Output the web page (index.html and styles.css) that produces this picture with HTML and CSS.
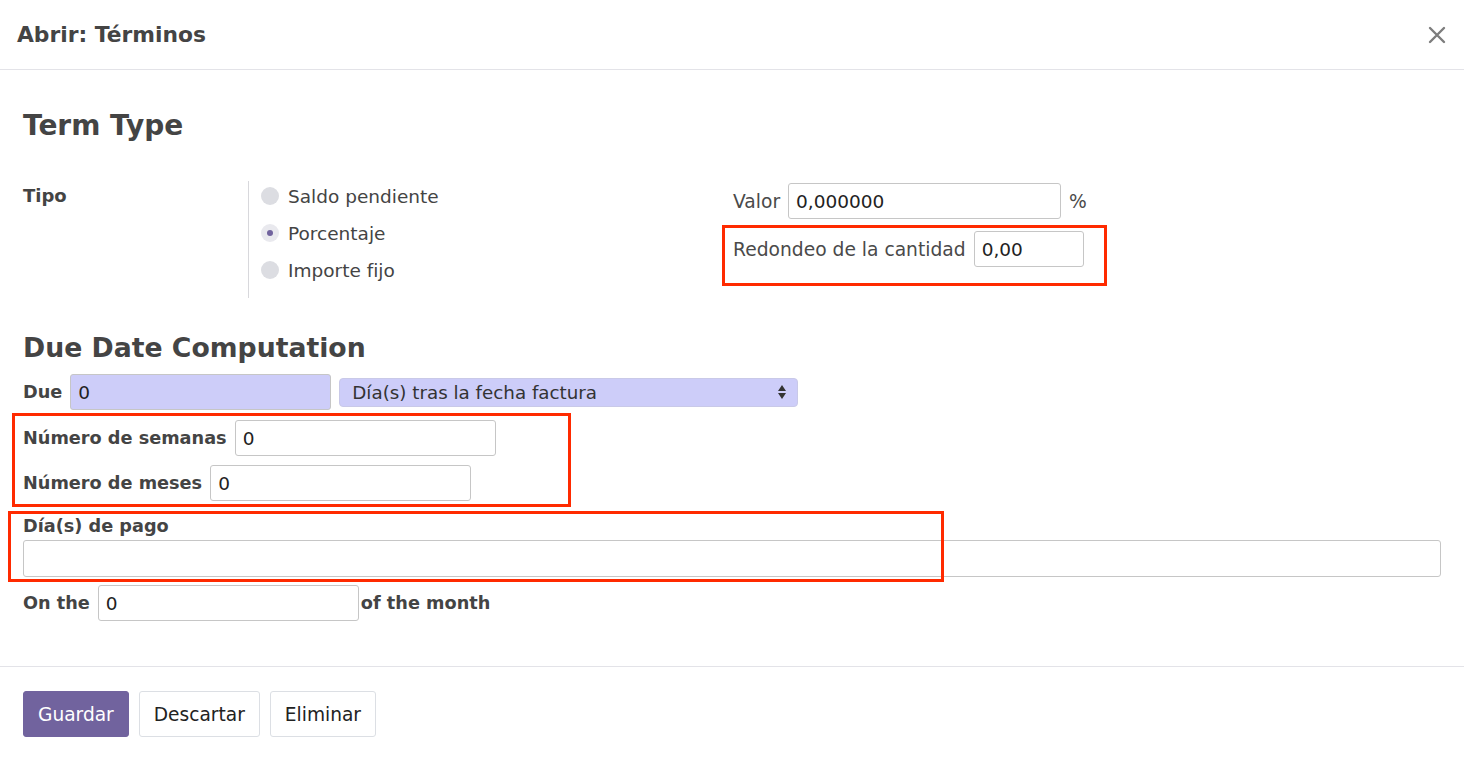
FILE: index.html
```html
<!DOCTYPE html>
<html lang="es">
<head>
    <meta charset="UTF-8">
    <title>Abrir: Términos</title>
    <link rel="stylesheet" href="styles.css">
</head>
<body>
    <div class="modal">
        <div class="modal-header">
            <h4 class="modal-title">Abrir: Términos</h4>
            <button class="close" type="button">
                <svg width="18" height="18" viewBox="0 0 18 18"><path d="M2 2 L16 16 M16 2 L2 16" stroke="#7d7d7d" stroke-width="2.4" stroke-linecap="round"/></svg>
            </button>
        </div>

        <div class="modal-body">
            <h2 class="section-title">Term Type</h2>
            <div class="group">
                <div class="group-left">
                    <div class="field-label">Tipo</div>
                    <div class="radios">
                        <div class="radio-row"><span class="radio"></span>Saldo pendiente</div>
                        <div class="radio-row"><span class="radio checked"></span>Porcentaje</div>
                        <div class="radio-row"><span class="radio"></span>Importe fijo</div>
                    </div>
                </div>
                <div class="group-right">
                    <div class="inline-row">
                        <span class="plain-label">Valor</span>
                        <input class="input input-value" type="text" value="0,000000">
                        <span class="plain-label">%</span>
                    </div>
                    <div class="inline-row marked">
                        <span class="plain-label">Redondeo de la cantidad</span>
                        <input class="input input-small" type="text" value="0,00">
                        <span class="mark mark-rounding"></span>
                    </div>
                </div>
            </div>

            <h2 class="section-title due-title">Due Date Computation</h2>
            <div class="inline-row due-row">
                <span class="bold-label">Due</span>
                <input class="input input-mid required" type="text" value="0">
                <div class="select required">
                    <span>Día(s) tras la fecha factura</span>
                    <svg width="10" height="16" viewBox="0 0 10 16"><path d="M5 1 L9 7 H1 Z M5 15 L9 9 H1 Z" fill="#333"/></svg>
                </div>
            </div>
            <div class="week-month marked">
                <div class="inline-row">
                    <span class="bold-label">Número de semanas</span>
                    <input class="input input-mid" type="text" value="0">
                </div>
                <div class="inline-row">
                    <span class="bold-label">Número de meses</span>
                    <input class="input input-mid" type="text" value="0">
                </div>
                <span class="mark mark-weeks"></span>
            </div>
            <div class="pay-days marked">
                <div class="bold-label">Día(s) de pago</div>
                <input class="input input-full" type="text" value="">
                <span class="mark mark-days"></span>
            </div>
            <div class="inline-row on-row">
                <span class="bold-label">On the</span>
                <input class="input input-mid" type="text" value="0">
                <span class="bold-label">of the month</span>
            </div>
        </div>

        <div class="modal-footer">
            <button class="btn btn-primary">Guardar</button>
            <button class="btn">Descartar</button>
            <button class="btn">Eliminar</button>
        </div>
    </div>
</body>
</html>
```

FILE: styles.css
```css
body {
    margin: 0;
    background: #ffffff;
    font-family: "DejaVu Sans", "Liberation Sans", sans-serif;
    color: #4a4a4a;
}
.modal {
    width: 1464px;
    height: 767px;
    background: #ffffff;
}
.modal-header {
    height: 69px;
    border-bottom: 1px solid #e3e3e8;
    display: flex;
    align-items: center;
    justify-content: space-between;
    padding: 0 18px 0 17px;
}
.modal-title {
    margin: 0;
    font-size: 21.8px;
    font-weight: bold;
    color: #444;
}
.close {
    border: none;
    background: none;
    padding: 0;
    display: flex;
}
.modal-body {
    padding: 0 23px 45px 23px;
}
.section-title {
    margin: 40px 0 0 0;
    font-size: 28px;
    line-height: 32px;
    font-weight: bold;
    color: #444;
}
.due-title {
    margin-top: 34px;
    font-size: 26.7px;
}
.group {
    display: flex;
    margin-top: 39px;
}
.group-left {
    width: 710px;
    display: flex;
}
.field-label {
    width: 225px;
    font-weight: bold;
    font-size: 18px;
    line-height: 30px;
    color: #444;
}
.radios {
    border-left: 1px solid #d8d8dc;
    padding: 0 0 13px 12px;
    display: flex;
    flex-direction: column;
    gap: 7px;
}
.radio-row {
    height: 30px;
    display: flex;
    align-items: center;
    gap: 9px;
    font-size: 18.5px;
    color: #444;
}
.radio {
    width: 18px;
    height: 18px;
    border-radius: 50%;
    background: #dcdde2;
    display: flex;
    align-items: center;
    justify-content: center;
}
.radio.checked {
    background: #e9e9ee;
}
.radio.checked::after {
    content: "";
    width: 6px;
    height: 6px;
    border-radius: 50%;
    background: #71639e;
}
.group-right {
    padding-top: 2px;
    display: flex;
    flex-direction: column;
    gap: 12px;
}
.inline-row {
    display: flex;
    align-items: center;
    gap: 8px;
}
.plain-label {
    font-size: 18.7px;
    color: #4a4a4a;
}
.bold-label {
    font-size: 17.7px;
    line-height: 22px;
    font-weight: bold;
    color: #444;
}
.input {
    box-sizing: border-box;
    height: 36px;
    border: 1px solid #c6c6c6;
    border-radius: 3px;
    padding: 0 7px;
    font-family: "DejaVu Sans", sans-serif;
    font-size: 18.5px;
    color: #222;
    background: #ffffff;
}
.input-value {
    width: 273px;
}
.input-small {
    width: 110px;
}
.input-mid {
    width: 261px;
}
.input-full {
    width: 100%;
    height: 37px;
}
.required {
    background: #cdcdf9;
}
.select {
    box-sizing: border-box;
    width: 459px;
    height: 29px;
    border: 1px solid #c9c9e8;
    border-radius: 4px;
    display: flex;
    align-items: center;
    justify-content: space-between;
    padding: 0 10px 0 12px;
    font-size: 18.3px;
    color: #333;
}
.due-row {
    margin-top: 10px;
}
.week-month {
    margin-top: 10px;
    display: flex;
    flex-direction: column;
    gap: 9px;
    align-items: flex-start;
}
.pay-days {
    margin-top: 14px;
    display: flex;
    flex-direction: column;
    gap: 3px;
}
.on-row {
    margin-top: 8px;
}
.on-row .bold-label:last-child {
    margin-left: -6px;
}
.marked {
    position: relative;
}
.mark {
    position: absolute;
    box-sizing: border-box;
    border: 3px solid #ff2a00;
}
.mark-rounding {
    left: -11px;
    top: -6px;
    width: 385px;
    height: 61px;
}
.mark-weeks {
    left: -11px;
    top: -7px;
    width: 559px;
    height: 94px;
}
.mark-days {
    left: -15px;
    top: -4px;
    width: 936px;
    height: 71px;
}
.modal-footer {
    border-top: 1px solid #e3e3e8;
    padding: 24px 23px;
    display: flex;
    gap: 10px;
}
.btn {
    height: 46px;
    padding: 0 14px;
    border: 1px solid #dcdfe4;
    border-radius: 3px;
    background: #ffffff;
    font-family: "DejaVu Sans", sans-serif;
    font-size: 18.6px;
    color: #222;
}
.btn-primary {
    background: #71639e;
    border-color: #71639e;
    color: #ffffff;
}
```
